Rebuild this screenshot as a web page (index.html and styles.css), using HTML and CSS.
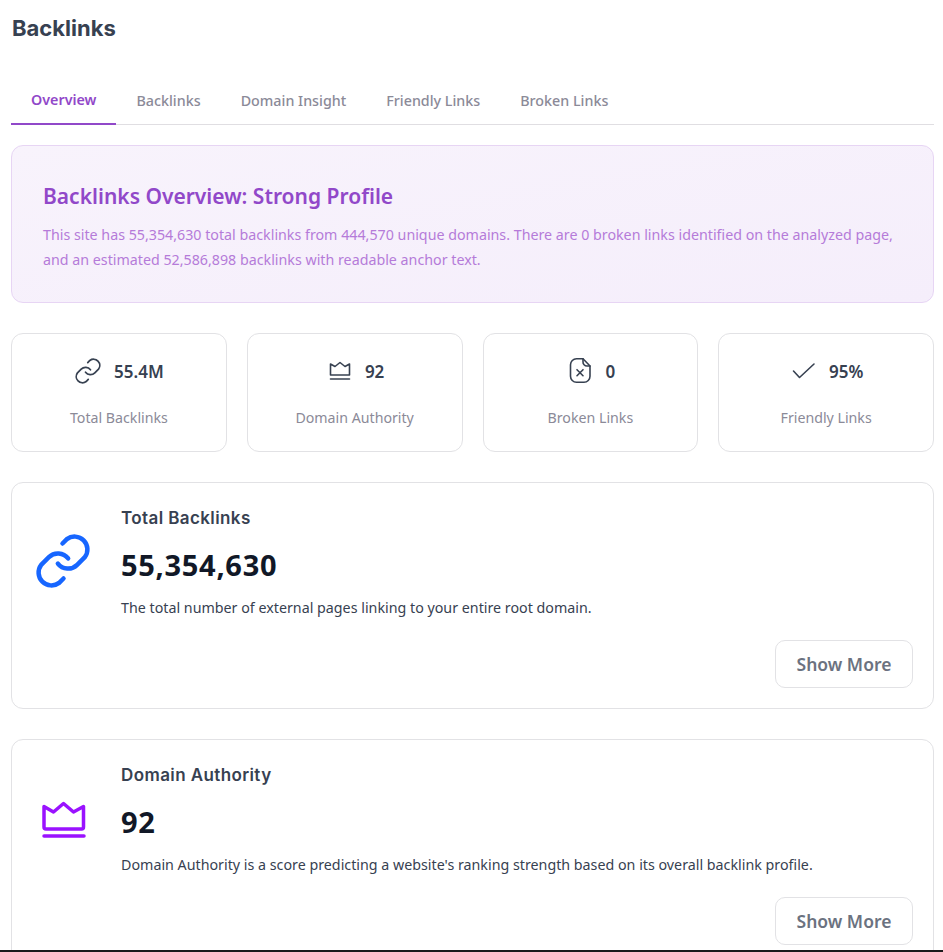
FILE: index.html
```html
<!DOCTYPE html>
<html lang="en">
  <head>
    <meta charset="utf-8">
    <title>Backlinks</title>
    <meta name="viewport" content="width=device-width, initial-scale=1">
    <link rel="stylesheet" href="styles.css">
  </head>
  <body>
    <h1 class="page-title">Backlinks</h1>

    <nav class="tabs">
      <a class="tab active">Overview</a>
      <a class="tab">Backlinks</a>
      <a class="tab">Domain Insight</a>
      <a class="tab">Friendly Links</a>
      <a class="tab">Broken Links</a>
    </nav>

    <section class="banner">
      <h2 class="banner-title">Backlinks Overview: Strong Profile</h2>
      <p class="banner-text">This site has 55,354,630 total backlinks from 444,570 unique domains. There are 0 broken links identified on the analyzed page, and an estimated 52,586,898 backlinks with readable anchor text.</p>
    </section>

    <section class="stats">
      <div class="stat">
        <div class="stat-top">
          <svg class="stat-icon thick" viewBox="0.700 0.700 22.600 22.600"><path d="M10 13a5 5 0 0 0 7.500.5l3-3a5 5 0 0 0-7-7l-1.700 1.700"/><path d="M14 11a5 5 0 0 0-7.500-.5l-3 3a5 5 0 0 0 7 7l1.700-1.700"/></svg>
          <span class="stat-value">55.4M</span>
        </div>
        <div class="stat-label">Total Backlinks</div>
      </div>
      <div class="stat">
        <div class="stat-top">
          <svg class="stat-icon" viewBox="-1 0 28 28"><path d="M4.500 7l4.500 2.500L14 5.500l5 4L23.500 7v11h-19z"/><path d="M4.500 22h19"/></svg>
          <span class="stat-value">92</span>
        </div>
        <div class="stat-label">Domain Authority</div>
      </div>
      <div class="stat">
        <div class="stat-top">
          <svg class="stat-icon" viewBox="0 0 28 28"><path d="M10.500 1.700H17l7 7.300v10.300a6 6 0 0 1-6 6h-7.500a6 6 0 0 1-6-6V7.700a6 6 0 0 1 6-6z"/><path d="M17 1.700v3a4 4 0 0 0 4 4.300h3"/><path d="M11 12.700l6 6M17 12.700l-6 6"/></svg>
          <span class="stat-value">0</span>
        </div>
        <div class="stat-label">Broken Links</div>
      </div>
      <div class="stat">
        <div class="stat-top">
          <svg class="stat-icon" viewBox="0 0 28 28"><path d="M4.500 14l6 6.500L25 7"/></svg>
          <span class="stat-value">95%</span>
        </div>
        <div class="stat-label">Friendly Links</div>
      </div>
    </section>

    <section class="card">
      <div class="card-body">
        <svg class="card-icon blue" viewBox="1.100 1.100 21.800 21.800"><path d="M10 13a5 5 0 0 0 7.500.5l3-3a5 5 0 0 0-7-7l-1.700 1.700"/><path d="M14 11a5 5 0 0 0-7.500-.5l-3 3a5 5 0 0 0 7 7l1.700-1.700"/></svg>
        <div class="card-main">
          <h3 class="card-title">Total Backlinks</h3>
          <div class="card-value">55,354,630</div>
          <p class="card-text">The total number of external pages linking to your entire root domain.</p>
        </div>
      </div>
      <div class="card-foot"><button type="button" class="more">Show More</button></div>
    </section>

    <section class="card">
      <div class="card-body">
        <svg class="card-icon purple" viewBox="0 0 56 56"><path d="M9 16.500l9.500 5.500 10-8.500 10 8.500 10-5.500V37a2 2 0 0 1-2 2H11a2 2 0 0 1-2-2z"/><path d="M9 46h40"/></svg>
        <div class="card-main">
          <h3 class="card-title">Domain Authority</h3>
          <div class="card-value">92</div>
          <p class="card-text">Domain Authority is a score predicting a website's ranking strength based on its overall backlink profile.</p>
        </div>
      </div>
      <div class="card-foot"><button type="button" class="more">Show More</button></div>
    </section>

    <div class="window-edge"></div>
  </body>
</html>
```

FILE: styles.css
```css
html, body {
  height: 952px;
  overflow: hidden;
}
body {
  margin: 0;
  padding: 0 9px 0 11px;
  background: #fff;
  color: #374151;
  font-family: "Noto Sans", "Open Sans", sans-serif;
}
.page-title {
  margin: 0;
  padding: 14px 0 0 1px;
  height: 42px;
  font-family: Inter, sans-serif;
  font-size: 22px;
  line-height: 28px;
  font-weight: 700;
  color: #374151;
}
.tabs {
  display: flex;
  margin-top: 11px;
  height: 58px;
  border-bottom: 1px solid #e0dee2;
  box-sizing: border-box;
}
.tab {
  padding: 8px 20px 0;
  margin-bottom: -1px;
  display: flex;
  align-items: center;
  font-size: 14.300px;
  font-weight: 500;
  color: #8b8a98;
  height: 58px;
  box-sizing: border-box;
}
.tab.active {
  font-weight: 600;
  color: #9148c9;
  border-bottom: 2px solid #9148c9;
}
.banner {
  margin-top: 20px;
  height: 158px;
  box-sizing: border-box;
  padding: 34px 31px 0;
  border: 1px solid #e7d5f4;
  border-radius: 12px;
  background: linear-gradient(170deg, #f8f3fc, #f5eefb);
}
.banner-title {
  margin: 0;
  font-size: 21px;
  line-height: 32px;
  font-weight: 600;
  color: #9148c9;
}
.banner-text {
  margin: 10px 0 0;
  font-size: 14.250px;
  line-height: 25px;
  color: #b57bd9;
}
.stats {
  display: grid;
  grid-template-columns: repeat(4, 1fr);
  gap: 20px;
  margin-top: 30px;
}
.stat {
  height: 119px;
  box-sizing: border-box;
  border: 1px solid #e2e2e5;
  border-radius: 12px;
  text-align: center;
  padding-top: 18px;
}
.stat-top {
  display: flex;
  justify-content: center;
  align-items: center;
  gap: 12px;
  height: 38px;
}
.stat-icon {
  width: 28px;
  height: 28px;
  fill: none;
  stroke: #374151;
  stroke-width: 1.600;
  stroke-linecap: round;
  stroke-linejoin: round;
}
.stat-icon.thick {
  stroke-width: 1.400;
}
.stat-value {
  font-size: 17px;
  font-weight: 600;
  color: #374151;
}
.stat-label {
  margin-top: 17px;
  font-size: 14.200px;
  line-height: 22px;
  color: #8b8a98;
}
.card {
  margin-top: 30px;
  height: 227px;
  box-sizing: border-box;
  border: 1px solid #e2e2e5;
  border-radius: 12px;
  padding: 20px 20px 20px 23px;
}
.card-body {
  display: flex;
  gap: 30px;
  align-items: center;
}
.card-icon {
  width: 56px;
  height: 56px;
  flex: none;
  fill: none;
  stroke-linecap: round;
  stroke-linejoin: round;
}
.card-icon.blue {
  stroke: #1766ff;
  stroke-width: 1.750;
}
.card-icon.purple {
  stroke: #9a12ff;
  stroke-width: 3.500;
}
.card-main {
  flex: 1;
}
.card-title {
  margin: 0;
  font-family: Inter, sans-serif;
  font-size: 17px;
  line-height: 31px;
  font-weight: 600;
  letter-spacing: .4px;
  color: #374151;
}
.card-value {
  margin-top: 11px;
  font-size: 29px;
  line-height: 40px;
  font-weight: 700;
  letter-spacing: .7px;
  color: #111827;
}
.card-text {
  margin: 12px 0 0;
  font-size: 14.270px;
  line-height: 22px;
  color: #374151;
}
.card-foot {
  display: flex;
  justify-content: flex-end;
  margin-top: 21px;
}
.more {
  width: 138px;
  height: 48px;
  border: 1px solid #e2e2e5;
  border-radius: 10px;
  background: #fff;
  font-family: inherit;
  font-size: 17.500px;
  font-weight: 600;
  color: #6b7280;
}
/* dark line the capture has along its lower edge */
.window-edge {
  position: fixed;
  left: 0;
  right: 0;
  bottom: 0;
  height: 2px;
  background: #1a1a1a;
}
```
